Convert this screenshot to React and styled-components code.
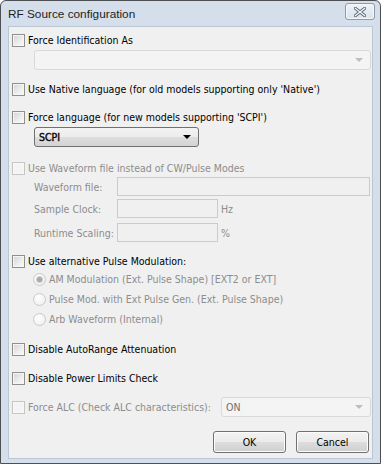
import React from 'react';
import styled, { createGlobalStyle } from 'styled-components';

const Global = createGlobalStyle`
  html, body { margin: 0; padding: 0; background: #ffffff; }
  body { font-family: "DejaVu Sans Condensed", "Liberation Sans", sans-serif; }
`;

const Frame = styled.div`
  width: 381px;
  height: 464px;
  box-sizing: border-box;
  border: 1px solid #4d4f53;
  border-radius: 6px 6px 0 0;
  background: #d5dfeb;
  display: flex;
  flex-direction: column;
  padding: 0 7px 4px 7px;
`;

const TitleBar = styled.div`
  height: 24px;
  display: flex;
  align-items: center;
  justify-content: space-between;
  font-family: "Liberation Sans", sans-serif;
  font-size: 11.8px;
  color: #1e1e1e;
  padding-top: 1px;
`;

const CloseBtn = styled.div`
  width: 30px;
  height: 17px;
  box-sizing: border-box;
  margin-top: -5px;
  margin-right: -2px;
  border: 1px solid #8d9aaa;
  border-radius: 3px;
  background: linear-gradient(#eef2f7, #dbe3ec);
  box-shadow: inset 0 0 0 1px #f4f7fa;
  display: flex;
  align-items: center;
  justify-content: center;
`;

const Client = styled.div`
  flex: 1;
  background: #f0f0f0;
  border: 1px solid #bac6d4;
  display: flex;
  flex-direction: column;
  padding: 5px 0 0 3px;
`;

const Row = styled.label`
  display: flex;
  align-items: center;
  height: 16px;
  margin-top: ${(p) => p.$top || 0}px;
  margin-left: ${(p) => p.$indent || 0}px;
  font-size: 10.5px;
  color: ${(p) => (p.$disabled ? '#8d8d8d' : '#000')};
  white-space: nowrap;
`;

const Check = styled.span`
  width: 13px;
  height: 13px;
  box-sizing: border-box;
  flex: none;
  margin-right: 3px;
  border: 1px solid ${(p) => (p.$disabled ? '#c6c6c6' : '#8e8f8f')};
  background: ${(p) =>
    p.$disabled
      ? '#f4f4f4'
      : 'linear-gradient(135deg, #d3d3d3 0%, #eeeeee 60%, #fbfbfb 100%)'};
  box-shadow: inset 0 0 0 1px ${(p) => (p.$disabled ? '#f8f8f8' : '#f6f6f6')};
`;

const Radio = styled.span`
  width: 13px;
  height: 13px;
  box-sizing: border-box;
  flex: none;
  margin-right: 3px;
  border-radius: 50%;
  border: 1px solid #cacaca;
  background: radial-gradient(circle at 40% 35%, #ffffff, #ececec);
  display: flex;
  align-items: center;
  justify-content: center;
  &::after {
    content: '';
    display: ${(p) => (p.$checked ? 'block' : 'none')};
    width: 5px;
    height: 5px;
    border-radius: 50%;
    background: #a9a9a9;
    box-shadow: 0 0 0 1px #cfcfcf;
  }
`;

const Combo = styled.div`
  height: ${(p) => p.$h || 20}px;
  box-sizing: border-box;
  width: ${(p) => (p.$w ? p.$w + 'px' : 'auto')};
  margin-top: ${(p) => p.$top || 0}px;
  margin-left: ${(p) => p.$indent || 0}px;
  margin-right: ${(p) => p.$right || 0}px;
  display: flex;
  align-items: center;
  justify-content: space-between;
  padding: 0 7px 0 4px;
  font-size: 10.5px;
  border-radius: 3px;
  ${(p) =>
    p.$disabled
      ? `border: 1px solid #d9d9d9; background: #f4f4f4; color: #6d6d6d;`
      : `border: 1px solid #707070; background: linear-gradient(#f3f3f3 0%, #ececec 48%, #dddddd 52%, #d4d4d4 100%);
         color: #000; -webkit-text-stroke: 0.35px #000;`}
`;

const Arrow = styled.span`
  width: 0;
  height: 0;
  border-left: 4px solid transparent;
  border-right: 4px solid transparent;
  border-top: 4px solid ${(p) => (p.$disabled ? '#bdbdbd' : '#000')};
`;

const FieldRow = styled.div`
  display: flex;
  align-items: center;
  margin-top: ${(p) => p.$top || 0}px;
  margin-left: 22px;
  font-size: 10.5px;
  color: #8d8d8d;
  white-space: nowrap;
`;

const FieldLabel = styled.span`
  width: 83px;
  flex: none;
`;

const TextBox = styled.div`
  height: 19px;
  box-sizing: border-box;
  width: ${(p) => (p.$w ? p.$w + 'px' : 'auto')};
  flex: ${(p) => (p.$w ? 'none' : '1')};
  margin-right: ${(p) => (p.$w ? 3 : 2)}px;
  border: 1px solid #cbcbcb;
  background: #f0f0f0;
`;

const ALCRow = styled.div`
  display: flex;
  align-items: center;
  justify-content: space-between;
  margin-top: ${(p) => p.$top || 0}px;
`;

const ButtonBar = styled.div`
  display: flex;
  justify-content: flex-end;
  gap: 10px;
  margin-top: 14px;
  padding-right: 3px;
`;

const Button = styled.button`
  width: 73px;
  height: 22px;
  box-sizing: border-box;
  font-family: "DejaVu Sans Condensed", "Liberation Sans", sans-serif;
  font-size: 10.5px;
  color: #000;
  border: 1px solid #707070;
  border-radius: 3px;
  background: linear-gradient(#f2f2f2 0%, #ebebeb 48%, #dddddd 52%, #cfcfcf 100%);
  box-shadow: inset 0 0 0 1px #fcfcfc;
  padding: 0;
`;

function CloseIcon() {
  return (
    <svg width="12" height="10" viewBox="0 0 12 10">
      <path d="M1.5 1.5 L10.5 8.5 M10.5 1.5 L1.5 8.5" stroke="#5d6875" strokeWidth="3.2" strokeLinecap="square" />
      <path d="M1.5 1.5 L10.5 8.5 M10.5 1.5 L1.5 8.5" stroke="#f2f4f7" strokeWidth="1.4" strokeLinecap="square" />
    </svg>
  );
}

export default function App() {
  return (
    <>
      <Global />
      <Frame>
        <TitleBar>
          <span>RF Source configuration</span>
          <CloseBtn><CloseIcon /></CloseBtn>
        </TitleBar>
        <Client>
          <Row><Check />Force Identification As</Row>
          <Combo $top={2} $indent={22} $right={1} $disabled><span /><Arrow $disabled /></Combo>

          <Row $top={11}><Check />Use Native language (for old models supporting only 'Native')</Row>

          <Row $top={12}><Check />Force language (for new models supporting 'SCPI')</Row>
          <Combo $top={2} $indent={22} $w={165}><span>SCPI</span><Arrow /></Combo>

          <Row $top={13} $disabled><Check $disabled />Use Waveform file instead of CW/Pulse Modes</Row>
          <FieldRow $top={1}><FieldLabel>Waveform file:</FieldLabel><TextBox /></FieldRow>
          <FieldRow $top={3}><FieldLabel>Sample Clock:</FieldLabel><TextBox $w={101} />Hz</FieldRow>
          <FieldRow $top={5}><FieldLabel>Runtime Scaling:</FieldLabel><TextBox $w={101} />%</FieldRow>

          <Row $top={11}><Check />Use alternative Pulse Modulation:</Row>
          <Row $top={2} $indent={21} $disabled><Radio $checked />AM Modulation (Ext. Pulse Shape) [EXT2 or EXT]</Row>
          <Row $top={4} $indent={21} $disabled><Radio />Pulse Mod. with Ext Pulse Gen. (Ext. Pulse Shape)</Row>
          <Row $top={4} $indent={21} $disabled><Radio />Arb Waveform (Internal)</Row>

          <Row $top={14}><Check />Disable AutoRange Attenuation</Row>
          <Row $top={13}><Check />Disable Power Limits Check</Row>

          <ALCRow $top={11}>
            <Row $disabled><Check $disabled />Force ALC (Check ALC characteristics):</Row>
            <Combo $w={150} $right={1} $disabled><span>ON</span><Arrow $disabled /></Combo>
          </ALCRow>

          <ButtonBar>
            <Button>OK</Button>
            <Button>Cancel</Button>
          </ButtonBar>
        </Client>
      </Frame>
    </>
  );
}
